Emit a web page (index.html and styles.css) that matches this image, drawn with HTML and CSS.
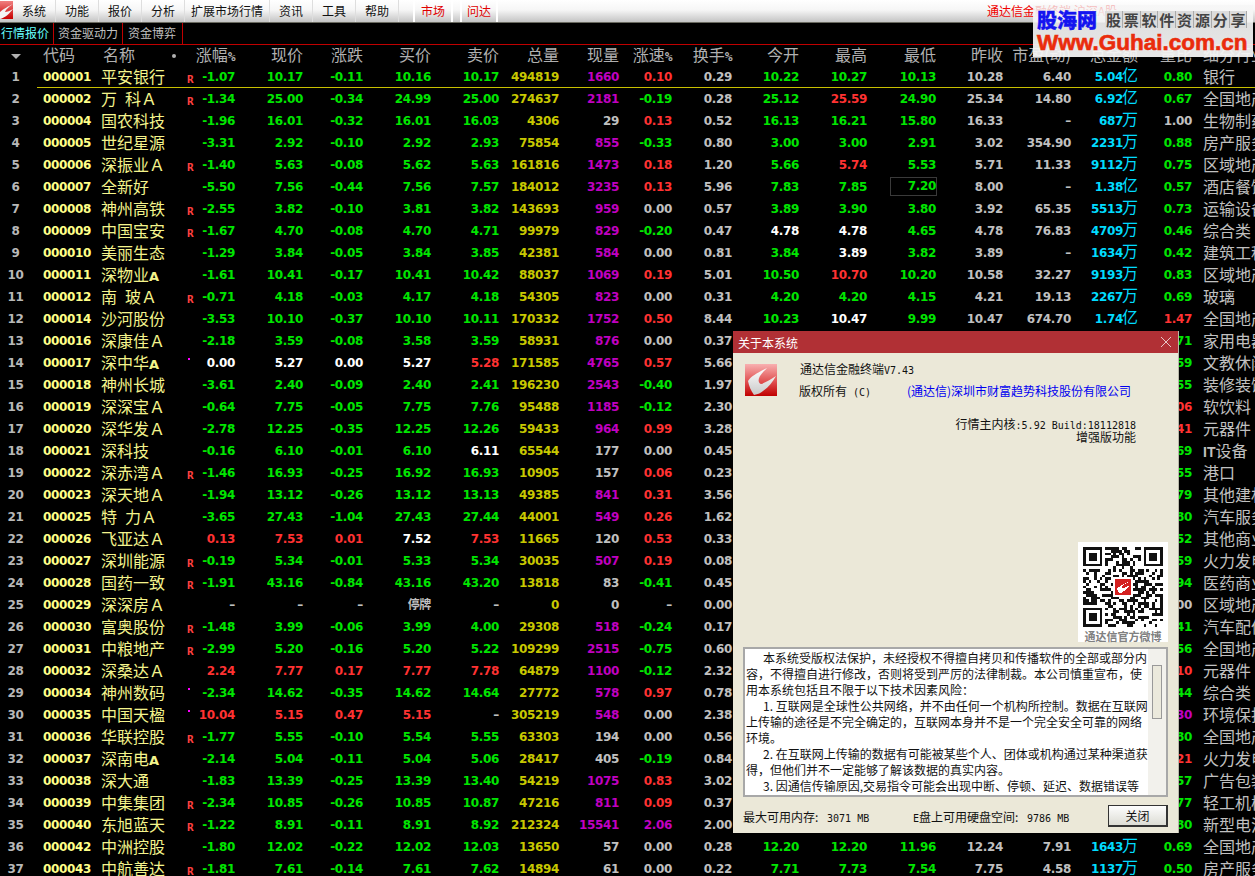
FILE: index.html
```html
<!DOCTYPE html>
<html lang="zh-CN">
<head>
<meta charset="utf-8">
<title>通达信金融终端</title>
<link rel="stylesheet" href="styles.css">
</head>
<body>
<header class="toolbar">
  <svg class="tool-logo" viewBox="0 0 13 18"><defs><linearGradient id="lg0" x1="0" y1="0" x2="0" y2="1"><stop offset="0" stop-color="#f08080"/><stop offset="1" stop-color="#c80000"/></linearGradient></defs><rect width="13" height="18" fill="url(#lg0)"/><path d="M13 3C9 5 3 8 0 11L0 18C5 17 10 12 13 8C10 10 7 11 5 11C6 8 10 5 13 3Z" fill="#f4f4f4"/></svg>
  <nav class="menu">
    <span class="menu-item">系统</span><span class="menu-item">功能</span><span class="menu-item">报价</span><span class="menu-item">分析</span><span class="menu-item menu-wide">扩展市场行情</span><span class="menu-item">资讯</span><span class="menu-item">工具</span><span class="menu-item">帮助</span>
  </nav>
  <span class="tool-btn tool-btn-a">市场</span>
  <span class="tool-btn tool-btn-b">问达</span>
  <span class="app-title">通达信金融终端 沪深A股</span>
</header>
<div class="tabs">
  <span class="tab tab-a">行情报价</span><span class="tab tab-b">资金驱动力</span><span class="tab tab-c">资金博弈</span>
</div>
<div class="quote-view">
<table class="quotes">
  <colgroup>
    <col class="c37"><col class="c64"><col class="c85"><col class="c12"><col class="c37"><col class="c68"><col class="c60"><col class="c68"><col class="c68"><col class="c60"><col class="c60"><col class="c53"><col class="c60"><col class="c67"><col class="c68"><col class="c69"><col class="c67"><col class="c68"><col class="c67"><col class="c54"><col class="c63">
  </colgroup>
  <thead>
    <tr>
      <th class="h-idx"><i class="sort"></i></th>
      <th class="h-left">代码</th>
      <th class="h-name"><span>名称</span><b class="h-dot"></b></th>
      <th colspan="2">涨幅<b>%</b></th>
      <th>现价</th><th>涨跌</th><th>买价</th><th>卖价</th><th>总量</th><th>现量</th>
      <th>涨速<b>%</b></th><th>换手<b>%</b></th><th>今开</th><th>最高</th><th>最低</th><th>昨收</th><th>市盈(动)</th><th>总金额</th><th>量比</th>
      <th class="h-ind">细分行业</th>
    </tr>
  </thead>
  <tbody id="rows"></tbody>
</table>
</div>

<aside class="watermark">
  <div class="wm-top"><span class="wm-name">股海网</span><span class="wm-tag"><i>股</i><i>票</i><i>软</i><i>件</i><i>资</i><i>源</i><i>分</i><i>享</i></span></div>
  <div class="wm-url">Www.Guhai.com.cn</div>
</aside>

<section class="dialog">
  <div class="dlg-title"><span>关于本系统</span>
    <svg class="dlg-close" viewBox="0 0 10 10"><path d="M0 0L10 10M10 0L0 10" stroke="#e8c8c8" fill="none"/></svg>
  </div>
  <div class="dlg-head">
    <svg class="dlg-logo" viewBox="0 0 32 32"><defs><linearGradient id="lg1" x1="0" y1="0" x2="0" y2="1"><stop offset="0" stop-color="#f8b0b0"/><stop offset=".55" stop-color="#e05050"/><stop offset="1" stop-color="#c00000"/></linearGradient><linearGradient id="lg2" x1="0" y1="0" x2="0" y2="1"><stop offset="0" stop-color="#ffffff"/><stop offset="1" stop-color="#c8c8c8"/></linearGradient></defs><rect width="32" height="32" fill="url(#lg1)"/><path d="M22 4C14 8 6 12 3 17C4 22 6 27 9 31C13 30 16 29 18 27C24 23 28 17 31 12C26 15 20 19 16 20C13 19 13 15 15 12C17 9 20 6 22 4Z" fill="url(#lg2)"/></svg>
    <div class="dlg-info">
      <div class="dlg-line">通达信金融终端<span class="lat">V7.43</span></div>
      <div class="dlg-line dlg-copy"><span class="copy-l">版权所有<span class="lat"> (C)</span></span><span class="copy-r">(通达信)深圳市财富趋势科技股份有限公司</span></div>
    </div>
  </div>
  <div class="dlg-ver">
    <div>行情主内核<span class="lat">:5.92 Build:18112818</span></div>
    <div>增强版功能</div>
  </div>
  <figure class="qr">
    <svg class="qr-code" viewBox="0 0 29 29" shape-rendering="crispEdges"><path id="qrpath" d="" fill="#111"/><rect x="11.5" y="11.5" width="6" height="6" rx=".6" fill="#d42020"/><path d="M16.6 12.6C15 13.3 13 14.2 12.3 15.2L13.3 16.9C15 16.2 16 15 16.8 14C15.7 14.6 14.6 15 14 14.8C14.2 14 15.6 13.2 16.6 12.6Z" fill="#fff"/></svg>
    <figcaption>通达信官方微博</figcaption>
  </figure>
  <div class="legal">
    <div class="legal-text">
      <p class="ind">本系统受版权法保护，未经授权不得擅自拷贝和传播软件的全部或部分内</p>
      <p>容，不得擅自进行修改，否则将受到严厉的法律制裁。本公司慎重宣布，使</p>
      <p>用本系统包括且不限于以下技术因素风险：</p>
      <p class="ind">1. 互联网是全球性公共网络，并不由任何一个机构所控制。数据在互联网</p>
      <p>上传输的途径是不完全确定的，互联网本身并不是一个完全安全可靠的网络</p>
      <p>环境。</p>
      <p class="ind">2. 在互联网上传输的数据有可能被某些个人、团体或机构通过某种渠道获</p>
      <p>得，但他们并不一定能够了解该数据的真实内容。</p>
      <p class="ind">3. 因通信传输原因,交易指令可能会出现中断、停顿、延迟、数据错误等</p>
    </div>
    <div class="scroll"><i class="thumb"></i></div>
  </div>
  <div class="dlg-foot">
    <span class="foot-a">最大可用内存: <span class="lat gap">3071 MB</span></span>
    <span class="foot-b"><span class="lat">E</span>盘上可用硬盘空间: <span class="lat gap">9786 MB</span></span>
    <button class="close-btn" type="button">关闭</button>
  </div>
</section>
<script src="app.js"></script>
</body>
</html>
```
FILE: styles.css
```css
* { box-sizing: border-box; }
html, body { margin: 0; height: 876px; overflow: hidden; background: #000; }
body { font-family: "Noto Sans CJK SC", "Liberation Sans", sans-serif; font-size: 12px; color: #c0c0c0; }

/* toolbar */
.toolbar { display: flex; height: 23px; background: linear-gradient(#fff 0, #f6f6f6 45%, #c4c4c4 100%); border-bottom: 1px solid #6a6a60; color: #111; line-height: 21px; }
.tool-logo { width: 13px; height: 18px; margin-top: 1px; flex: none; }
.menu { display: flex; width: 386px; flex: none; }
.menu-item { width: 43px; text-align: center; border-right: 1px solid #dedede; }
.menu-wide { width: 85px; }
.tool-btn { color: #e00000; text-align: center; border-left: 2px solid #fff; border-right: 2px solid #fff; height: 22px; }
.tool-btn-a { width: 40px; margin-left: 14px; }
.tool-btn-b { width: 38px; margin-left: 7px; }
.app-title { margin-left: auto; width: 268px; color: #f00000; flex: none; white-space: nowrap; }

/* tabs */
.tabs { display: flex; height: 22px; border-bottom: 1px solid #c00000; line-height: 20px; margin-bottom: -4px; }
.tab { border-right: 1px solid #c00000; white-space: nowrap; color: #c0c0c0; }
.tab-a { width: 54px; padding-left: 1px; color: #66ffff; }
.tab-b { width: 69px; padding-left: 4px; }
.tab-c { width: 60px; padding-left: 5px; }

/* quote table */
.quote-view { height: 835px; padding-top: 4px; overflow: hidden; }
.quotes { table-layout: fixed; width: 1255px; border-collapse: separate; border-spacing: 0; }
.c37 { width: 37px; } .c64 { width: 64px; } .c85 { width: 85px; } .c12 { width: 12px; }
.c68 { width: 68px; } .c60 { width: 60px; } .c53 { width: 53px; } .c67 { width: 67px; }
.c69 { width: 69px; } .c54 { width: 54px; } .c63 { width: 63px; }
.quotes th { height: 21px; padding: 0; font-weight: 400; font-size: 16px; line-height: 19px; color: #b0b0b0; text-align: right; vertical-align: top; white-space: nowrap; }
.quotes th b { font: bold 13px/1px "DejaVu Sans Mono", monospace; letter-spacing: -.6px; }
.quotes th.h-idx { text-align: center; padding-right: 6px; }
.sort { display: inline-block; border: 5px solid transparent; border-top: 5px solid #b0b0b0; border-bottom: 0; vertical-align: 2px; }
.quotes th.h-left { text-align: left; padding-left: 6px; }
.quotes th.h-name { text-align: left; padding: 0 10px 0 2px; }
.quotes th .h-dot { float: right; width: 4px; height: 4px; border-radius: 50%; background: #b0b0b0; margin-top: 9px; }
.quotes th.h-ind { text-align: left; padding-left: 11px; overflow: hidden; }

.quotes td { height: 22px; padding: 0; text-align: right; vertical-align: top; white-space: nowrap; font: bold 12px/22px "DejaVu Sans", "Noto Sans CJK SC", sans-serif; letter-spacing: -.35px; }
.quotes td.idx { text-align: center; padding-right: 6px; color: #b8b8b8; }
.quotes td.code { text-align: left; padding-left: 6px; color: #ffff88; }
.quotes td.name { text-align: left; font: 400 16px/21px "Noto Sans CJK SC", sans-serif; letter-spacing: 0; color: #f4f48c; }
.quotes td.name b { font: bold 13px/1px "DejaVu Sans", sans-serif; }
.quotes td.ind { text-align: left; padding-left: 11px; overflow: hidden; font: 400 16px/21px "Noto Sans CJK SC", sans-serif; letter-spacing: 0; color: #c0c0c0; }
.quotes td.ind b { font: bold 14px/1px "Liberation Sans", sans-serif; }
tr.sel td:not(:first-child) { box-shadow: inset 0 -1px #c8c000; }
.quotes td.mark { text-align: left; }
.mark-r { display: block; margin-top: 10px; color: #ff4040; font: bold 11px/8px "DejaVu Sans Mono", monospace; padding-left: 1px; }
.mark-d { display: block; margin: 6px 0 0 2px; width: 2px; height: 2px; background: #ff00ff; }
.up { color: #ff3232; } .dn { color: #00e600; } .eq { color: #fff; }
.gy { color: #c0c0c0; } .yl { color: #c8c800; } .mg { color: #c000c0; } .cy { color: #00dcff; }
.unit { font: 400 16px/1px "Noto Sans CJK SC", sans-serif; margin-left: -1px; letter-spacing: 0; }
.box { display: inline-block; vertical-align: top; width: 47px; height: 19px; line-height: 17px; margin: 1px -1px 0 0; border: 1px solid #3a3a3a; }

/* watermark */
.watermark { position: absolute; left: 1033px; top: 5px; width: 220px; height: 52px; background: linear-gradient(rgba(246,246,246,.72) 0, rgba(246,246,246,.9) 8px, rgba(246,246,246,.94) 100%); padding: 4px 0 0 4px; overflow: hidden; }
.wm-top { display: flex; height: 21px; align-items: center; }
.wm-name { font: 900 20px/21px "Noto Sans CJK SC", sans-serif; color: #1414f0; width: 68px; -webkit-text-stroke: .4px #1414f0; }
.wm-tag { display: flex; }
.wm-tag i { width: 17.8px; height: 17px; font: 700 15px/17px "Noto Sans CJK SC", sans-serif; color: #444; text-align: center; background: #dcdcdc; border-right: 1px solid #aaa; }
.wm-url { font: bold 22.5px/26px "Liberation Sans", sans-serif; color: #ea2c0c; -webkit-text-stroke: .6px #ea2c0c; white-space: nowrap; }

/* dialog */
.dialog { position: absolute; left: 733px; top: 331px; width: 446px; height: 502px; background: #ebe8d8; color: #111; border-right: 1px solid #b8b6a8; display: flex; flex-direction: column; }
.dlg-title { height: 22px; background: #b13035; color: #fff; line-height: 21px; padding: 0 6px 0 5px; display: flex; justify-content: space-between; align-items: center; flex: none; }
.dlg-close { width: 10px; height: 10px; margin-right: 1px; }
.lat { font: 10px "DejaVu Sans Mono", monospace; }
.gap { margin-left: 6px; }
.dlg-head { display: flex; padding: 5px 0 0 12px; height: 49px; flex: none; }
.dlg-logo { width: 32px; height: 32px; margin-top: 6px; flex: none; }
.dlg-info { margin-left: 23px; }
.dlg-line { height: 22px; line-height: 22px; white-space: nowrap; }
.dlg-copy { display: flex; margin-left: -1px; }
.copy-l { width: 108px; }
.copy-r { color: #0000f0; }
.dlg-ver { margin-top: 16px; padding-right: 42px; text-align: right; line-height: 12px; flex: none; height: 24px; white-space: nowrap; }
.qr { margin: 100px 10px 0 auto; width: 90px; height: 100px; background: #fff; padding: 5px 5px 0; flex: none; }
.qr-code { display: block; width: 80px; height: 80px; }
.qr figcaption { text-align: center; color: #808080; font-weight: 700; font-size: 11px; line-height: 14px; margin-top: 2px; white-space: nowrap; }
.legal { display: flex; margin: 5px 10px 0; height: 150px; background: #fff; border: 2px solid #a8a8a8; flex: none; overflow: hidden; padding-left: 1px; }
.legal-text { flex: 1; line-height: 16px; padding-top: 1px; white-space: nowrap; overflow: hidden; }
.legal-text p { margin: 0; }
.legal-text .ind { text-indent: 17px; }
.scroll { width: 18px; background: #f2f1ec; flex: none; padding: 16px 4px 0; }
.thumb { display: block; width: 10px; height: 54px; background: #ebe9dc; border: 1px solid #999; }
.dlg-foot { display: flex; align-items: center; margin-top: 8px; padding: 0 10px; height: 22px; flex: none; white-space: nowrap; }
.foot-a { width: 170px; }
.close-btn { margin-left: auto; width: 60px; height: 22px; padding: 0; border: 1px solid #333; border-bottom-width: 2px; border-right-width: 2px; background: linear-gradient(#fdfdfd, #dcdcd4); font: 12px/18px "Noto Sans CJK SC", sans-serif; color: #111; }
```
FILE: app.js
```js
var DATA = [
"000001 平安银行 R -1.07 10.17 -0.11 10.16 10.17 494819 1660 0.10 0.29 10.22 10.27 10.13 10.28 6.40 5.04亿 0.80 银行",
"000002 万\u2002科Ａ R -1.34 25.00 -0.34 24.99 25.00 274637 2181 -0.19 0.28 25.12 25.59 24.90 25.34 14.80 6.92亿 0.67 全国地产",
"000004 国农科技 _ -1.96 16.01 -0.32 16.01 16.03 4306 29 0.13 0.52 16.13 16.21 15.80 16.33 – 687万 1.00 生物制药",
"000005 世纪星源 _ -3.31 2.92 -0.10 2.92 2.93 75854 855 -0.33 0.80 3.00 3.00 2.91 3.02 354.90 2231万 0.88 房产服务",
"000006 深振业Ａ R -1.40 5.63 -0.08 5.62 5.63 161816 1473 0.18 1.20 5.66 5.74 5.53 5.71 11.33 9112万 0.75 区域地产",
"000007 全新好 _ -5.50 7.56 -0.44 7.56 7.57 184012 3235 0.13 5.96 7.83 7.85 7.20 8.00 – 1.38亿 0.57 酒店餐饮",
"000008 神州高铁 R -2.55 3.82 -0.10 3.81 3.82 143693 959 0.00 0.57 3.89 3.90 3.80 3.92 65.35 5513万 0.73 运输设备",
"000009 中国宝安 R -1.67 4.70 -0.08 4.70 4.71 99979 829 -0.20 0.47 4.78 4.78 4.65 4.78 76.83 4709万 0.46 综合类",
"000010 美丽生态 _ -1.29 3.84 -0.05 3.84 3.85 42381 584 0.00 0.81 3.84 3.89 3.82 3.89 – 1634万 0.42 建筑工程",
"000011 深物业A _ -1.61 10.41 -0.17 10.41 10.42 88037 1069 0.19 5.01 10.50 10.70 10.20 10.58 32.27 9193万 0.83 区域地产",
"000012 南\u2002玻Ａ R -0.71 4.18 -0.03 4.17 4.18 54305 823 0.00 0.31 4.20 4.20 4.15 4.21 19.13 2267万 0.69 玻璃",
"000014 沙河股份 _ -3.53 10.10 -0.37 10.10 10.11 170332 1752 0.50 8.44 10.23 10.47 9.99 10.47 674.70 1.74亿 1.47 全国地产",
"000016 深康佳Ａ _ -2.18 3.59 -0.08 3.58 3.59 58931 876 0.00 0.37 _ _ _ _ _ _ 0.71 家用电器",
"000017 深中华A D 0.00 5.27 0.00 5.27 5.28 171585 4765 0.57 5.66 _ _ _ _ _ _ 0.59 文教休闲",
"000018 神州长城 _ -3.61 2.40 -0.09 2.40 2.41 196230 2543 -0.40 1.97 _ _ _ _ _ _ 0.55 装修装饰",
"000019 深深宝Ａ _ -0.64 7.75 -0.05 7.75 7.76 95488 1185 -0.12 2.30 _ _ _ _ _ _ 1.06 软饮料",
"000020 深华发Ａ _ -2.78 12.25 -0.35 12.25 12.26 59433 964 0.99 3.28 _ _ _ _ _ _ 1.41 元器件",
"000021 深科技 _ -0.16 6.10 -0.01 6.10 6.11 65544 177 0.00 0.45 _ _ _ _ _ _ 0.69 IT设备",
"000022 深赤湾Ａ R -1.46 16.93 -0.25 16.92 16.93 10905 157 0.06 0.23 _ _ _ _ _ _ 0.55 港口",
"000023 深天地Ａ _ -1.94 13.12 -0.26 13.12 13.13 49385 841 0.31 3.56 _ _ _ _ _ _ 0.79 其他建材",
"000025 特\u2002力Ａ _ -3.65 27.43 -1.04 27.43 27.44 44001 549 0.26 1.62 _ _ _ _ _ _ 0.80 汽车服务",
"000026 飞亚达Ａ _ 0.13 7.53 0.01 7.52 7.53 11665 120 0.53 0.33 _ _ _ _ _ _ 0.52 其他商业",
"000027 深圳能源 R -0.19 5.34 -0.01 5.33 5.34 30035 507 0.19 0.08 _ _ _ _ _ _ 0.59 火力发电",
"000028 国药一致 R -1.91 43.16 -0.84 43.16 43.20 13818 83 -0.41 0.45 _ _ _ _ _ _ 0.94 医药商业",
"000029 深深房Ａ _ – – – 停牌 – 0 0 – 0.00 _ _ _ _ _ _ 0.00 区域地产",
"000030 富奥股份 R -1.48 3.99 -0.06 3.99 4.00 29308 518 -0.24 0.17 _ _ _ _ _ _ 0.41 汽车配件",
"000031 中粮地产 R -2.99 5.20 -0.16 5.20 5.22 109299 2515 -0.75 0.60 _ _ _ _ _ _ 0.56 全国地产",
"000032 深桑达Ａ _ 2.24 7.77 0.17 7.77 7.78 64879 1100 -0.12 2.32 _ _ _ _ _ _ 1.10 元器件",
"000034 神州数码 D -2.34 14.62 -0.35 14.62 14.64 27772 578 0.97 0.78 _ _ _ _ _ _ 0.44 综合类",
"000035 中国天楹 D 10.04 5.15 0.47 5.15 – 305219 548 0.00 2.38 _ _ _ _ _ _ 2.30 环境保护",
"000036 华联控股 R -1.77 5.55 -0.10 5.54 5.55 63303 194 0.00 0.56 _ _ _ _ _ _ 0.80 全国地产",
"000037 深南电A _ -2.14 5.04 -0.11 5.04 5.06 28417 405 -0.19 0.84 _ _ _ _ _ _ 1.21 火力发电",
"000038 深大通 _ -1.83 13.39 -0.25 13.39 13.40 54219 1075 0.83 3.02 _ _ _ _ _ _ 0.57 广告包装",
"000039 中集集团 R -2.34 10.85 -0.26 10.85 10.87 47216 811 0.09 0.37 _ _ _ _ _ _ 0.77 轻工机械",
"000040 东旭蓝天 R -1.22 8.91 -0.11 8.91 8.92 212324 15541 2.06 2.00 _ _ _ _ _ _ 0.80 新型电池",
"000042 中洲控股 _ -1.80 12.02 -0.22 12.02 12.03 13650 57 0.00 0.28 12.20 12.20 11.96 12.24 7.91 1643万 0.69 全国地产",
"000043 中航善达 R -1.81 7.61 -0.14 7.61 7.62 14894 61 0.00 0.22 7.71 7.73 7.54 7.75 4.58 1137万 0.50 房产服务"
];

function sign(v) { return v > 0 ? "up" : v < 0 ? "dn" : "eq"; }
function cell(text, cls) {
  return "<td" + (cls ? ' class="' + cls + '"' : "") + ">" + (text === "_" ? "" : text) + "</td>";
}
function ratioClass(v) {
  if (v >= 2) return "mg";
  if (v > 1) return "up";
  if (v === 1 || v === 0) return "gy";
  return "dn";
}

document.getElementById("rows").innerHTML = DATA.map(function (line, i) {
  var f = line.split(" ");
  var chg = parseFloat(f[5]);
  var hasChg = !isNaN(chg);
  var prev = hasChg ? Math.round((parseFloat(f[4]) - chg) * 100) / 100 : 0;
  function price(t) {
    if (!hasChg || isNaN(parseFloat(t))) return "gy";
    return sign(Math.round((parseFloat(t) - prev) * 100) / 100);
  }
  var mark = f[2] === "R" ? '<span class="mark-r">R</span>' : f[2] === "D" ? '<span class="mark-d"></span>' : "";
  var name = f[1].replace(/A$/, "<b>A</b>");
  var cur = parseInt(f[9], 10);
  var spd = parseFloat(f[10]);
  var spdCls = isNaN(spd) || spd === 0 ? "gy" : spd >= 2 ? "mg" : spd > 0 ? "up" : "dn";
  var low = f[14];
  var lowHtml = low === "7.20" ? '<span class="box">7.20</span>' : low;
  var amt = f[17].replace(/([亿万])$/, '<span class="unit">$1</span>');
  var ind = f[19].replace(/^IT/, "<b>IT</b>");
  return '<tr' + (i === 0 ? ' class="sel"' : "") + ">" +
    cell(i + 1, "idx") + cell(f[0], "code") + cell(name, "name") + cell(mark, "mark") +
    cell(f[3], hasChg ? sign(parseFloat(f[3])) : "gy") +
    cell(f[4], price(f[4])) +
    cell(f[5], hasChg ? sign(chg) : "gy") +
    cell(f[6], price(f[6])) + cell(f[7], price(f[7])) +
    cell(f[8], "yl") +
    cell(f[9], cur >= 500 ? "mg" : "gy") +
    cell(f[10], spdCls) +
    cell(f[11], "gy") +
    cell(f[12], price(f[12])) + cell(f[13], price(f[13])) + cell(lowHtml, price(low)) +
    cell(f[15], "gy") + cell(f[16], "gy") + cell(amt, "cy") +
    cell(f[18], ratioClass(parseFloat(f[18]))) +
    cell(ind, "ind") + "</tr>";
}).join("");

/* QR pattern: fixed finder squares plus deterministic modules */
(function () {
  var n = 29, d = "", seed = 20181128;
  function finder(x, y) {
    d += "M" + x + " " + y + "h7v7h-7zM" + (x + 1) + " " + (y + 1) + "v5h5v-5z" +
         "M" + (x + 2) + " " + (y + 2) + "h3v3h-3z";
  }
  function rnd() { seed = (seed * 1103515245 + 12345) & 0x7fffffff; return (seed >> 16) & 1; }
  for (var y = 0; y < n; y++) {
    for (var x = 0; x < n; x++) {
      var bit = rnd();
      var inFinder = (x < 8 && y < 8) || (x > 20 && y < 8) || (x < 8 && y > 20);
      var inLogo = x > 10 && x < 18 && y > 10 && y < 18;
      if (bit && !inFinder && !inLogo) d += "M" + x + " " + y + "h1v1h-1z";
    }
  }
  finder(0, 0); finder(22, 0); finder(0, 22);
  var p = document.getElementById("qrpath");
  p.setAttribute("d", d);
  p.setAttribute("fill-rule", "evenodd");
})();
```
